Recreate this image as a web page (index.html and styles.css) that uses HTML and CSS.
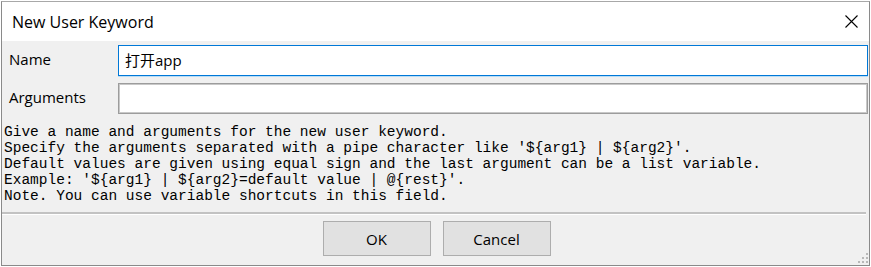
FILE: index.html
```html
<!DOCTYPE html>
<html lang="en">
<head>
  <meta charset="UTF-8">
  <title>New User Keyword</title>
  <link rel="stylesheet" href="styles.css">
</head>
<body>
  <div class="window">
    <div class="titlebar">
      <span class="title">New User Keyword</span>
      <svg class="close" width="13" height="13" viewBox="0 0 13 13">
        <path d="M0.5 0.5 L12.5 12.5 M12.5 0.5 L0.5 12.5" stroke="#000" stroke-width="1.1" fill="none"/>
      </svg>
    </div>
    <div class="content">
      <div class="fields">
        <label class="field-label">Name</label>
        <div class="input focused">打开app</div>
        <label class="field-label">Arguments</label>
        <div class="input"></div>
      </div>
      <pre class="help">Give a name and arguments for the new user keyword.
Specify the arguments separated with a pipe character like '${arg1} | ${arg2}'.
Default values are given using equal sign and the last argument can be a list variable.
Example: '${arg1} | ${arg2}=default value | @{rest}'.
Note. You can use variable shortcuts in this field.</pre>
      <div class="separator"></div>
      <div class="buttons">
        <button class="btn">OK</button>
        <button class="btn">Cancel</button>
      </div>
      <svg class="grip" width="10" height="10" viewBox="0 0 10 10">
        <rect x="8" y="0" width="2" height="2" fill="#b8b8b8"/>
        <rect x="4" y="4" width="2" height="2" fill="#b8b8b8"/>
        <rect x="8" y="4" width="2" height="2" fill="#b8b8b8"/>
        <rect x="0" y="8" width="2" height="2" fill="#b8b8b8"/>
        <rect x="4" y="8" width="2" height="2" fill="#b8b8b8"/>
        <rect x="8" y="8" width="2" height="2" fill="#b8b8b8"/>
      </svg>
    </div>
  </div>
</body>
</html>
```

FILE: styles.css
```css
html {
  background: #fff;
}
body {
  margin: 0;
  font-family: "Segoe UI", "Open Sans", "Noto Sans CJK SC", sans-serif;
}
.window {
  margin: 1px 1px 0 1px;
  height: 263px;
  border: 1px solid #8a8a8a;
  border-top-color: #a8a8a8;
  display: flex;
  flex-direction: column;
  background: #f0f0f0;
}
.titlebar {
  height: 39px;
  background: #fff;
  display: flex;
  align-items: center;
  justify-content: space-between;
  padding: 0 11px 0 10px;
}
.title {
  font-size: 16px;
  color: #000;
}
.content {
  flex: 1;
  position: relative;
  display: flex;
  flex-direction: column;
}
.fields {
  display: grid;
  grid-template-columns: 109px 1fr;
  row-gap: 7px;
  padding: 4px 1px 0 7px;
  align-items: center;
}
.field-label {
  font-size: 15px;
  color: #000;
  margin-top: -4px;
}
.input {
  height: 31px;
  box-sizing: border-box;
  background: #fff;
  border: 1px solid #9c9c9c;
  box-shadow: inset 0 0 0 1px #c8c8c8;
  font-family: "Open Sans", "Noto Sans CJK SC", sans-serif;
  font-size: 15px;
  line-height: 29px;
  padding-left: 6px;
}
.input.focused {
  border-color: #0078d7;
  box-shadow: 0 1px 0 #b9dcf5;
}
.help {
  margin: 10px 0 0 2px;
  font-family: "Liberation Mono", monospace;
  font-size: 14.5px;
  line-height: 16px;
  color: #000;
}
.separator {
  margin-top: 8px;
  margin-right: 3px;
  height: 2px;
  background: #c2c2c2;
  border-bottom: 1px solid #fff;
}
.buttons {
  display: flex;
  justify-content: center;
  gap: 12px;
  padding-top: 6px;
  padding-left: 2px;
}
.btn {
  width: 108px;
  height: 35px;
  background: #e1e1e1;
  border: 1px solid #adadad;
  font-family: "Segoe UI", "Open Sans", sans-serif;
  font-size: 15px;
  color: #000;
}
.grip {
  position: absolute;
  right: 1px;
  bottom: 2px;
}
```
